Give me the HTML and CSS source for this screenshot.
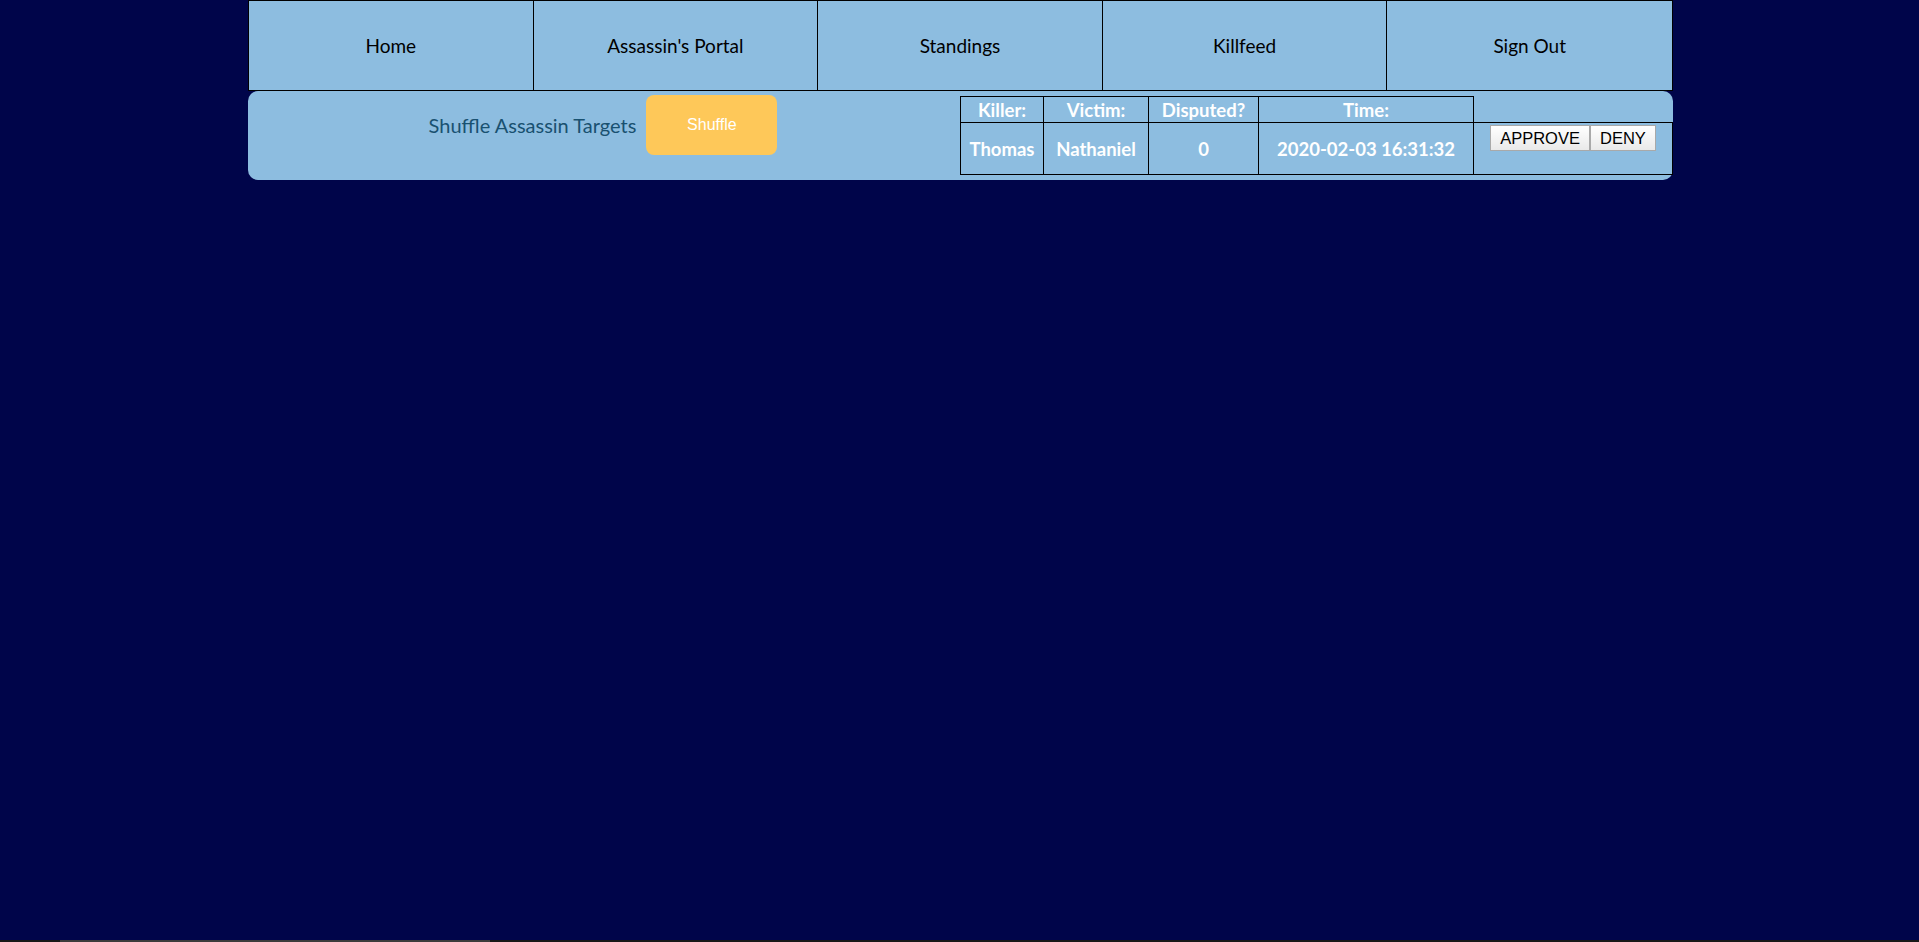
FILE: index.html
```html
<!DOCTYPE html>
<html>
<head>
<meta charset="utf-8">
<title>Assassin Admin</title>
<link rel="stylesheet" href="styles.css">
</head>
<body>
<div class="page">
  <nav class="nav">
    <a class="nav-item" href="#">Home</a>
    <a class="nav-item" href="#">Assassin's Portal</a>
    <a class="nav-item" href="#">Standings</a>
    <a class="nav-item" href="#">Killfeed</a>
    <a class="nav-item" href="#">Sign Out</a>
  </nav>
  <section class="panel">
    <div class="shuffle">
      <span class="shuffle-label">Shuffle Assassin Targets</span>
      <button class="shuffle-btn">Shuffle</button>
    </div>
    <div class="feed">
      <table class="feed-table">
        <colgroup>
          <col class="c-killer">
          <col class="c-victim">
          <col class="c-disputed">
          <col class="c-time">
          <col class="c-actions">
        </colgroup>
        <tr class="head-row">
          <th>Killer:</th>
          <th>Victim:</th>
          <th>Disputed?</th>
          <th>Time:</th>
        </tr>
        <tr class="body-row">
          <td>Thomas</td>
          <td>Nathaniel</td>
          <td>0</td>
          <td>2020-02-03 16:31:32</td>
          <td class="actions">
            <div class="action-btns">
              <button class="act-btn">APPROVE</button>
              <button class="act-btn">DENY</button>
            </div>
          </td>
        </tr>
      </table>
    </div>
  </section>
</div>
<div class="hscroll"><div class="hscroll-thumb"></div></div>
</body>
</html>
```

FILE: styles.css
```css
html, body {
  margin: 0;
  padding: 0;
  background: #00054a;
  height: 100%;
  overflow: hidden;
}

body {
  font-family: Lato, "Open Sans", sans-serif;
}

.page {
  width: 1425px;
  margin-left: 248px;
}

.nav {
  display: grid;
  grid-template-columns: repeat(5, 1fr);
  border: 1px solid #000;
  height: 89px;
  background: #8dbde0;
}

.nav-item {
  display: flex;
  align-items: center;
  justify-content: center;
  color: #000;
  text-decoration: none;
  font-size: 19px;
  border-right: 1px solid #000;
  padding-bottom: 1px;
}

.nav-item:last-child {
  border-right: none;
}

.panel {
  display: grid;
  grid-template-columns: 712px 1fr;
  height: 89px;
  background: #8dbde0;
  border-radius: 10px;
}

.shuffle {
  display: flex;
  justify-content: center;
  align-items: center;
  align-self: start;
  gap: 10px;
  padding-top: 4px;
  padding-right: 2px;
}

.shuffle-label {
  color: #195170;
  font-size: 20px;
  padding-bottom: 1px;
}

.shuffle-btn {
  width: 131px;
  height: 60px;
  border: none;
  border-radius: 8px;
  background: #fec859;
  color: #fff;
  font-family: "Liberation Sans", Arial, sans-serif;
  font-size: 16px;
  padding: 0;
}

.feed {
  padding-top: 5px;
}

.feed-table {
  border-collapse: collapse;
  table-layout: fixed;
  width: 712px;
  color: #fff;
  font-weight: bold;
  font-size: 18.5px;
}

.c-killer { width: 83px; }
.c-victim { width: 105px; }
.c-disputed { width: 110px; }
.c-time { width: 215px; }
.c-actions { width: 199px; }

.feed-table th,
.feed-table td {
  border: 1px solid #000;
  padding: 0;
  text-align: center;
  white-space: nowrap;
}

.head-row th {
  height: 25px;
  line-height: 24px;
}

.body-row td {
  height: 49px;
  line-height: 22px;
}

.feed-table td.actions {
  vertical-align: top;
  padding-top: 2px;
}

.action-btns {
  display: flex;
  justify-content: center;
}

.act-btn {
  font-family: "Liberation Sans", Arial, sans-serif;
  font-size: 16.5px;
  font-weight: normal;
  line-height: 19px;
  color: #000;
  height: 26px;
  padding: 0 9px;
  border: 1px solid #a9a9a9;
  border-radius: 0;
  background: linear-gradient(#ffffff, #e9e9e9);
}

.hscroll {
  position: fixed;
  left: 0;
  right: 0;
  bottom: 0;
  height: 2px;
  background: #181818;
}

.hscroll-thumb {
  position: absolute;
  left: 60px;
  width: 430px;
  top: 0;
  bottom: 0;
  background: #3c3c3c;
}
```
